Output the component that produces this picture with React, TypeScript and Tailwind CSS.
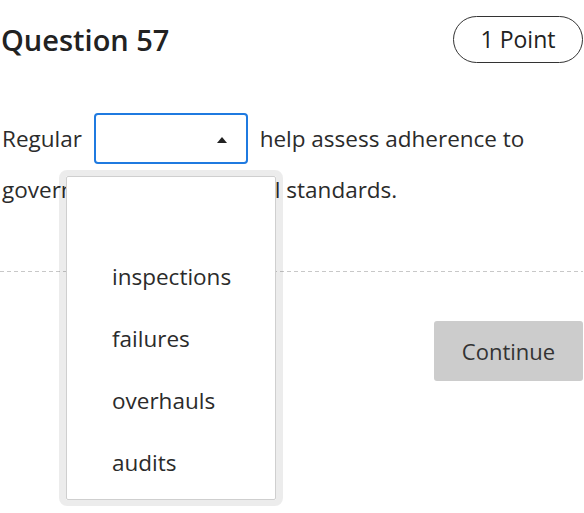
import React from "react";

export default function App() {
  const items = ["inspections", "failures", "overhauls", "audits"];
  return (
    <div
      className="relative w-[584px] h-[513px] bg-white text-[#2b2b2b] overflow-hidden"
      style={{ fontFamily: '"Open Sans", sans-serif' }}
    >
      <div className="pl-[3px] pr-[1px]">
        <div className="flex items-center justify-between pt-[16px]">
          <h1 className="ml-[-2px] text-[29px] font-[550] leading-none text-[#222]">Question 57</h1>
          <div className="h-[47px] w-[130px] rounded-full border border-[#333] flex items-center justify-center text-[23px] font-medium text-[#222]">
            1 Point
          </div>
        </div>

        <div className="mt-[50px] text-[22.5px] leading-[51px] ml-[-1px]">
          Regular{" "}
          <span className="relative mx-[6px] inline-block h-[51px] w-[154px] rounded-[4px] border-2 border-[#1f7ae0] align-top">
            <span className="absolute right-[19px] top-[22px] h-0 w-0 border-x-[5px] border-b-[6px] border-x-transparent border-b-[#222]" />
          </span>{" "}
          help assess adherence to government and industrial standards.
        </div>

        <div className="mt-[56px] h-px ml-[-3px] bg-[repeating-linear-gradient(to_right,#c8c8c8_0_4px,transparent_4px_7px)]" />

        <div className="mt-[49px] flex justify-end">
          <button className="h-[60px] w-[149px] rounded-[3px] bg-[#cccccc] text-[22px] text-[#333]">
            Continue
          </button>
        </div>
      </div>

      <div className="absolute left-[59px] top-[170px] w-[224px] h-[336px] rounded-[8px] border-x-[7px] border-t-[6px] border-b-[6px] border-black/[0.075]">
        <div className="h-full w-full rounded-[2px] border border-[#cfcfcf] bg-white pt-[82px] pl-[45px]">
          {items.map((t) => (
            <div key={t} className="h-[62px] text-[22.5px] leading-[36px] text-[#2b2b2b]">
              {t}
            </div>
          ))}
        </div>
      </div>
    </div>
  );
}
